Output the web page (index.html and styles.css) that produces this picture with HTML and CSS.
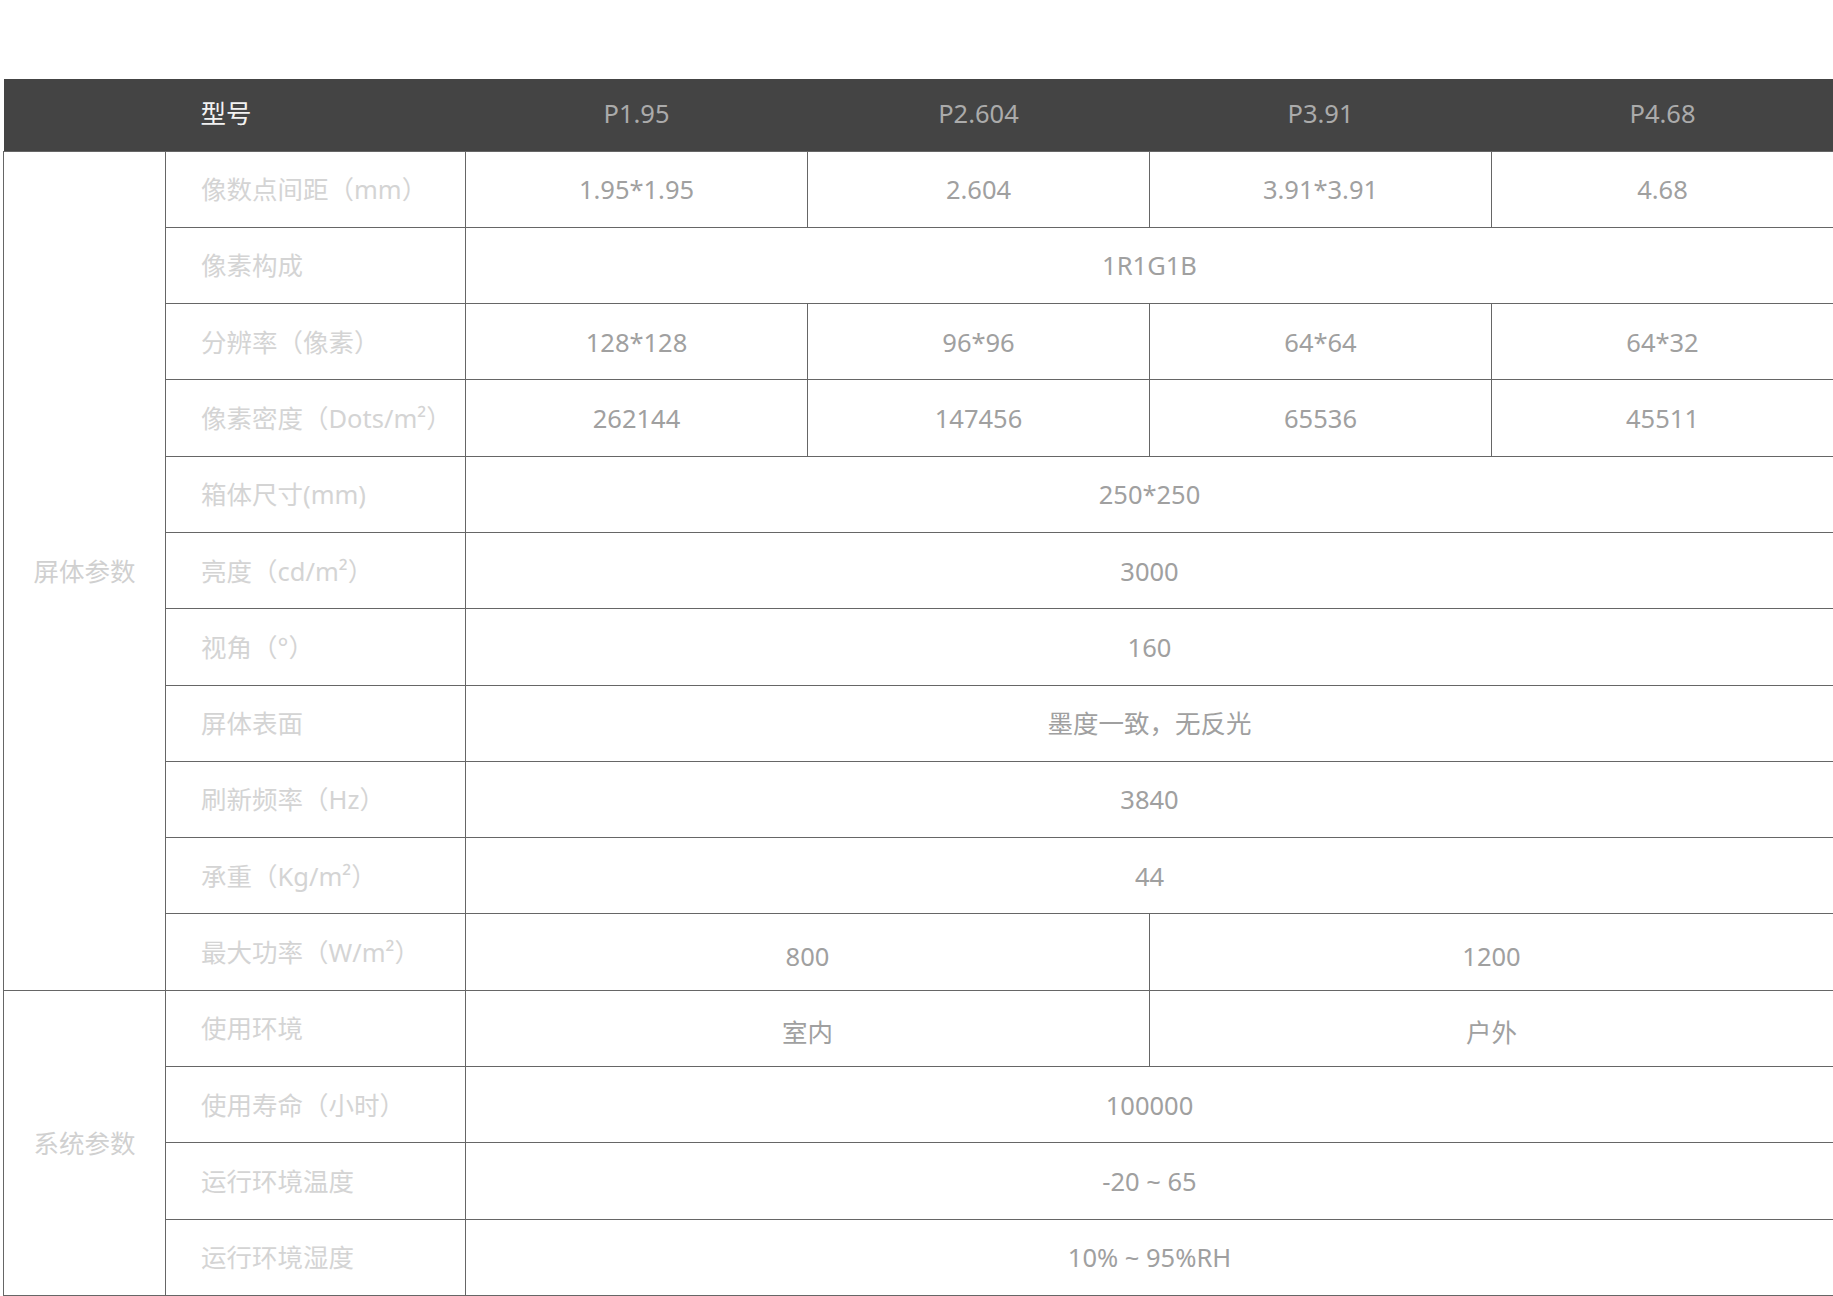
FILE: index.html
```html
<!DOCTYPE html>
<html lang="zh-CN">
<head>
<meta charset="utf-8">
<title>规格参数</title>
<link rel="stylesheet" href="styles.css">
</head>
<body>
<div class="page">
<table class="spec">
  <colgroup>
    <col class="c-group"><col class="c-label"><col class="c-data"><col class="c-data"><col class="c-data"><col class="c-data">
  </colgroup>
  <thead>
    <tr>
      <th class="h-empty"></th>
      <th class="h-label">型号</th>
      <th>P1.95</th>
      <th>P2.604</th>
      <th>P3.91</th>
      <th>P4.68</th>
    </tr>
  </thead>
  <tbody>
    <tr>
      <td class="group" rowspan="11">屏体参数</td>
      <td class="label">像数点间距（mm）</td>
      <td>1.95*1.95</td><td>2.604</td><td>3.91*3.91</td><td>4.68</td>
    </tr>
    <tr><td class="label">像素构成</td><td colspan="4">1R1G1B</td></tr>
    <tr><td class="label">分辨率（像素）</td><td>128*128</td><td>96*96</td><td>64*64</td><td>64*32</td></tr>
    <tr><td class="label">像素密度（Dots/m²）</td><td>262144</td><td>147456</td><td>65536</td><td>45511</td></tr>
    <tr><td class="label">箱体尺寸(mm)</td><td colspan="4">250*250</td></tr>
    <tr><td class="label">亮度（cd/m²）</td><td colspan="4">3000</td></tr>
    <tr><td class="label">视角（°）</td><td colspan="4">160</td></tr>
    <tr><td class="label">屏体表面</td><td colspan="4">墨度一致，无反光</td></tr>
    <tr><td class="label">刷新频率（Hz）</td><td colspan="4">3840</td></tr>
    <tr><td class="label">承重（Kg/m²）</td><td colspan="4">44</td></tr>
    <tr><td class="label">最大功率（W/m²）</td><td colspan="2" class="low">800</td><td colspan="2" class="low">1200</td></tr>
    <tr>
      <td class="group" rowspan="4">系统参数</td>
      <td class="label">使用环境</td>
      <td colspan="2" class="low">室内</td><td colspan="2" class="low">户外</td>
    </tr>
    <tr><td class="label">使用寿命（小时）</td><td colspan="4">100000</td></tr>
    <tr><td class="label">运行环境温度</td><td colspan="4">-20 ~ 65</td></tr>
    <tr><td class="label">运行环境湿度</td><td colspan="4">10% ~ 95%RH</td></tr>
  </tbody>
</table>
</div>
</body>
</html>
```

FILE: styles.css
```css
html, body {
  margin: 0;
  padding: 0;
  background: #ffffff;
}

.page {
  padding: 79px 0 0 3px;
}

.spec {
  border-collapse: collapse;
  table-layout: fixed;
  width: 1830px;
  font-family: "Noto Sans", "Noto Sans CJK SC", sans-serif;
  font-size: 25.5px;
  font-weight: 400;
  line-height: 1.3;
}

.c-group { width: 162px; }
.c-label { width: 300px; }
.c-data { width: 342px; }

.spec thead tr {
  height: 72px;
  background: #444444;
}

.spec th {
  color: #ababab;
  font-weight: 400;
  text-align: center;
  padding: 0 0 2px;
  border: none;
}

.spec th.h-label {
  color: #f2f2f2;
  text-align: left;
  padding-left: 35px;
}

.spec tbody tr {
  height: 76.3px;
}

.spec td {
  border: 1px solid #666666;
  color: #a0a0a0;
  text-align: center;
  vertical-align: middle;
  padding: 1px 0 0;
}

.spec td.label {
  color: #d4d4d4;
  text-align: left;
  padding-left: 35px;
}

.spec td.group {
  color: #d0d0d0;
}

.spec td.low {
  padding: 8px 0 0;
}
```
